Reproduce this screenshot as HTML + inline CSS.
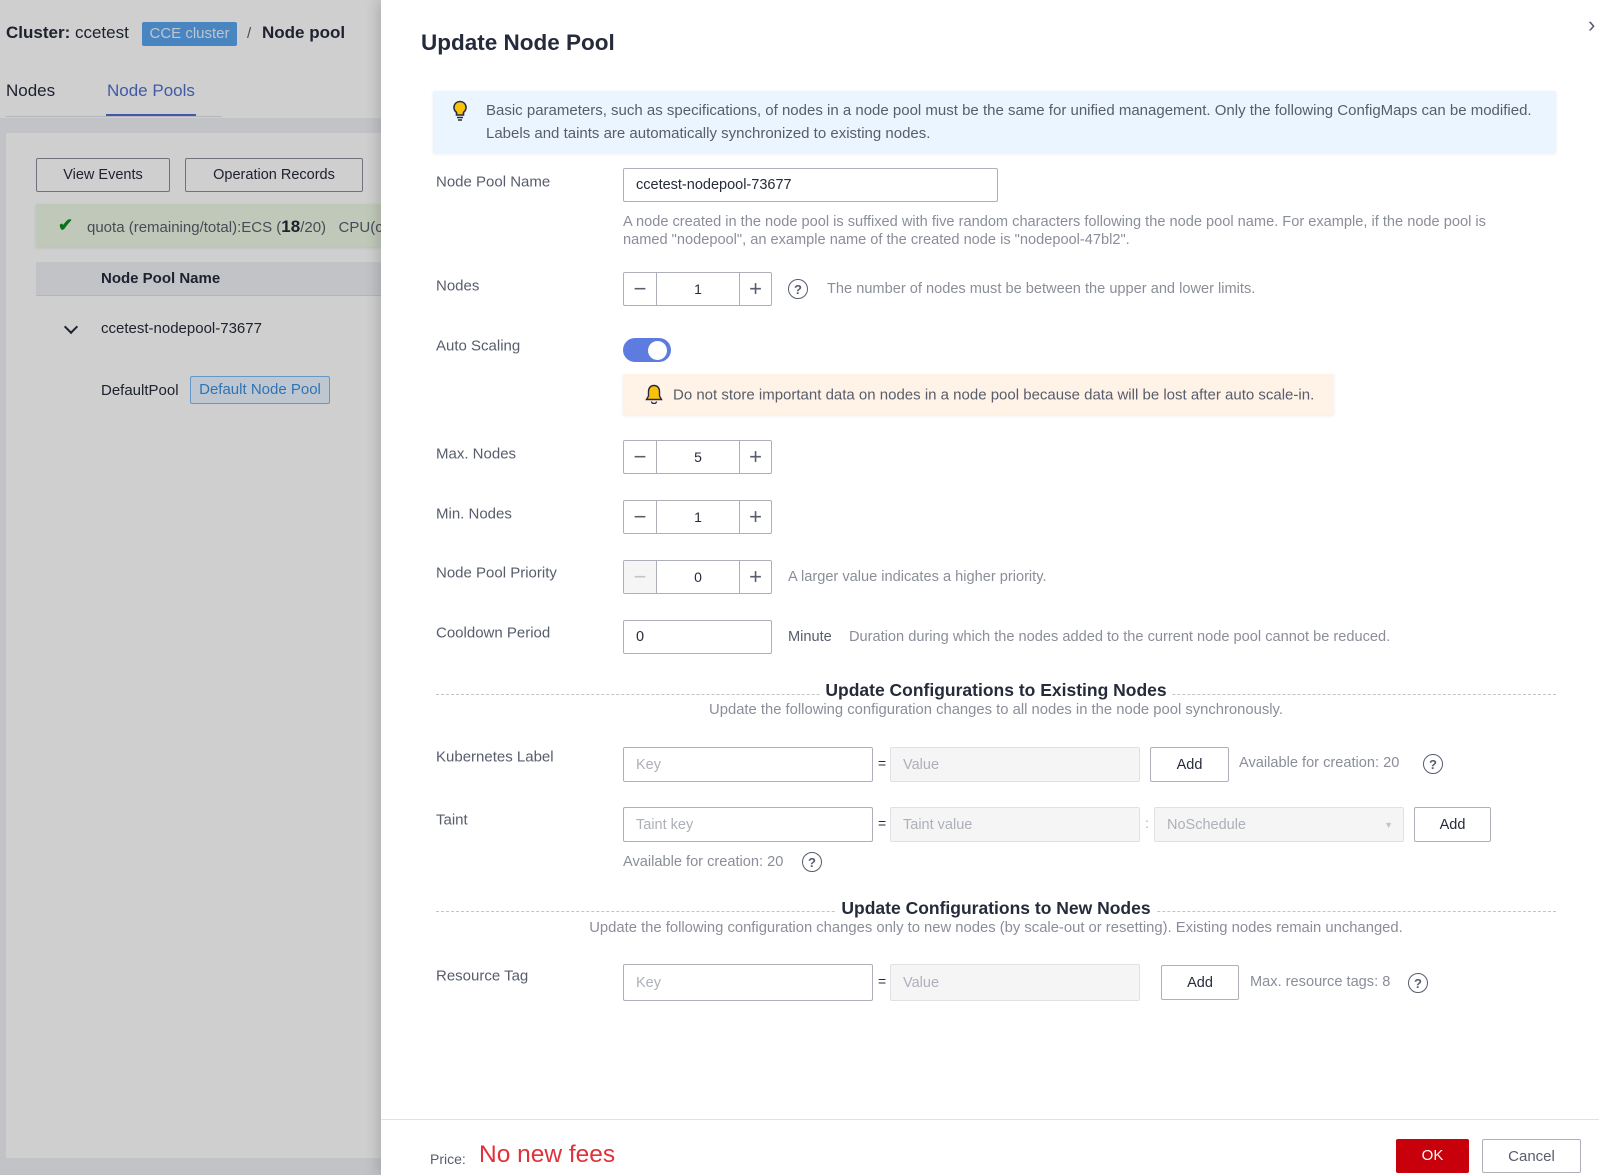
<!DOCTYPE html>
<html><head><meta charset="utf-8"><style>
*{box-sizing:border-box;margin:0;padding:0}
body{width:1599px;height:1175px;position:relative;overflow:hidden;font-family:"Liberation Sans",Arial,sans-serif;color:#252b3a;background:#fff}
.a{position:absolute;white-space:nowrap}
.left{position:absolute;left:0;top:0;width:381px;height:1175px;background:#fff;overflow:hidden}
.ov{position:absolute;left:0;top:0;width:381px;height:1175px;background:rgba(0,0,0,0.19)}
.drawer{position:absolute;left:381px;top:0;width:1218px;height:1175px;background:#fff;box-shadow:-4px 0 12px rgba(0,0,0,.15)}
.lbl{position:absolute;left:55px;font-size:15px;color:#575d6c;transform:translateY(-50%)}
.inp{position:absolute;border:1px solid #adb0b8;border-radius:2px;background:#fff;font-size:14.5px;display:flex;align-items:center;padding-left:12px;color:#252b3a}
.dis{background:#f5f5f6;border-color:#dfe1e6;color:#adb0b8}
.ph{color:#adb0b8}
.step{position:absolute;width:149px;height:34px;border:1px solid #adb0b8;border-radius:2px;display:flex}
.step div{display:flex;align-items:center;justify-content:center;font-size:14px}
.step .m{width:33px;border-right:1px solid #adb0b8;font-size:22px;color:#575d6c}
.step .v{flex:1}
.step .p{width:32px;border-left:1px solid #adb0b8;font-size:22px;color:#575d6c}
.hint{position:absolute;font-size:14.6px;color:#8a8e99;transform:translateY(-50%);white-space:nowrap}
.q{position:absolute;width:20px;height:20px;border:1.5px solid #575d6c;border-radius:50%;font-size:13px;display:flex;align-items:center;justify-content:center;color:#575d6c;transform:translate(-50%,-50%);font-weight:bold}
.btn{position:absolute;border:1px solid #adb0b8;border-radius:2px;background:#fff;font-size:14.5px;display:flex;align-items:center;justify-content:center;color:#252b3a}
</style></head><body>
<div class="left">
 <div class="a" style="left:6px;top:23px;font-size:17px"><b>Cluster:</b> ccetest</div>
 <div class="a" style="left:142px;top:22px;width:95px;height:24px;background:#5aa4ee;border-radius:2px;color:#eaf3fc;font-size:15px;line-height:24px;text-align:center">CCE cluster</div>
 <div class="a" style="left:247px;top:25px;font-size:15px;color:#575d6c">/</div>
 <div class="a" style="left:262px;top:23px;font-size:17px;font-weight:bold">Node pool</div>
 <div class="a" style="left:6px;top:81px;font-size:17px;color:#252b3a">Nodes</div>
 <div class="a" style="left:107px;top:81px;font-size:17px;color:#526ecc">Node Pools</div>
 <div class="a" style="left:6px;top:116px;width:216px;height:1px;background:#dfe1e6"></div>
 <div class="a" style="left:106px;top:114px;width:90px;height:2px;background:#526ecc"></div>
 <div class="a" style="left:0;top:118px;width:381px;height:1057px;background:#eef0f5"></div>
 <div class="a" style="left:6px;top:133px;width:375px;height:1025px;background:#fff"></div>
 <div class="btn" style="left:36px;top:158px;width:134px;height:34px;border-color:#8a8e99">View Events</div>
 <div class="btn" style="left:185px;top:158px;width:178px;height:34px;border-color:#8a8e99">Operation Records</div>
 <div class="a" style="left:36px;top:204px;width:345px;height:43px;background:#edf8e4;box-shadow:0 1px 3px rgba(0,0,0,.1)"></div>
 <div class="a" style="left:58px;top:215px;font-size:18px;color:#0d8d20;font-weight:bold">✔</div>
 <div class="a" style="left:87px;top:217px;font-size:15px;color:#575d6c">quota (remaining/total):ECS (<b style="font-size:17px;color:#252b3a">18</b>/20) &nbsp; CPU(c</div>
 <div class="a" style="left:36px;top:262px;width:345px;height:34px;background:#eef0f5;border-bottom:1px solid #dfe1e6"></div>
 <div class="a" style="left:101px;top:270px;font-size:15px;font-weight:bold;color:#252b3a">Node Pool Name</div>
 <div class="a" style="left:66px;top:322px;width:10px;height:10px;border-right:2px solid #252b3a;border-bottom:2px solid #252b3a;transform:rotate(45deg)"></div>
 <div class="a" style="left:101px;top:320px;font-size:15px">ccetest-nodepool-73677</div>
 <div class="a" style="left:101px;top:382px;font-size:15px">DefaultPool</div>
 <div class="a" style="left:190px;top:376px;width:140px;height:28px;background:#ebf5ff;border:1px solid #7fbbf5;border-radius:2px;color:#3b8ee0;font-size:15px;line-height:26px;text-align:center">Default Node Pool</div>
 <div class="ov"></div>
</div>
<div class="drawer">
 <div class="a" style="left:40px;top:30px;font-size:22.5px;font-weight:bold;color:#252b3a">Update Node Pool</div>
 <div class="a" style="left:1207px;top:12px;font-size:22px;color:#575d6c">›</div>
 <div class="a" style="left:52px;top:91px;width:1123px;height:62px;background:#ebf5ff;box-shadow:0 1px 3px rgba(0,0,0,.08)"></div>
 <svg class="a" style="left:71px;top:100px" width="16" height="22" viewBox="0 0 16 22"><path d="M8 1.5a6 6 0 0 0-3.5 10.9V15h7v-2.6A6 6 0 0 0 8 1.5z" fill="#fac20a" stroke="#252b3a" stroke-width="1.6"/><path d="M5 17.5h6M6 20h4" stroke="#252b3a" stroke-width="1.6"/></svg>
 <div class="a" style="left:105px;top:99px;font-size:15px;color:#575d6c;line-height:23px">Basic parameters, such as specifications, of nodes in a node pool must be the same for unified management. Only the following ConfigMaps can be modified.<br>Labels and taints are automatically synchronized to existing nodes.</div>

 <div class="lbl" style="top:182px">Node Pool Name</div>
 <div class="inp" style="left:242px;top:168px;width:375px;height:34px">ccetest-nodepool-73677</div>
 <div class="a" style="left:242px;top:213px;font-size:14.6px;color:#8a8e99;line-height:18px">A node created in the node pool is suffixed with five random characters following the node pool name. For example, if the node pool is<br>named "nodepool", an example name of the created node is "nodepool-47bl2".</div>

 <div class="lbl" style="top:286px">Nodes</div>
 <div class="step" style="left:242px;top:272px"><div class="m">−</div><div class="v">1</div><div class="p">+</div></div>
 <div class="q" style="left:417px;top:289px">?</div>
 <div class="hint" style="left:446px;top:289px">The number of nodes must be between the upper and lower limits.</div>

 <div class="lbl" style="top:346px">Auto Scaling</div>
 <div class="a" style="left:242px;top:338px;width:48px;height:24px;border-radius:12px;background:#5e7ce0"></div>
 <div class="a" style="left:267px;top:341px;width:19px;height:19px;border-radius:50%;background:#fff"></div>
 <div class="a" style="left:242px;top:374px;width:711px;height:41px;background:#fff3e8;box-shadow:0 1px 3px rgba(0,0,0,.08)"></div>
 <svg class="a" style="left:264px;top:384px" width="18" height="20" viewBox="0 0 18 20"><path d="M9 1.5c-3.5 0-5.5 2.7-5.5 6v4.5L1.5 15.5h15l-2-3.5V7.5c0-3.3-2-6-5.5-6z" fill="#fac20a" stroke="#252b3a" stroke-width="1.4"/><path d="M6.5 17.5a2.5 2 0 0 0 5 0" fill="none" stroke="#252b3a" stroke-width="1.4"/></svg>
 <div class="hint" style="left:292px;top:395px;color:#575d6c;font-size:15px">Do not store important data on nodes in a node pool because data will be lost after auto scale-in.</div>

 <div class="lbl" style="top:454px">Max. Nodes</div>
 <div class="step" style="left:242px;top:440px"><div class="m">−</div><div class="v">5</div><div class="p">+</div></div>
 <div class="lbl" style="top:514px">Min. Nodes</div>
 <div class="step" style="left:242px;top:500px"><div class="m">−</div><div class="v">1</div><div class="p">+</div></div>
 <div class="lbl" style="top:573px">Node Pool Priority</div>
 <div class="step" style="left:242px;top:560px"><div class="m" style="background:#f5f5f6;color:#c2c4cc">−</div><div class="v">0</div><div class="p">+</div></div>
 <div class="hint" style="left:407px;top:577px">A larger value indicates a higher priority.</div>
 <div class="lbl" style="top:633px">Cooldown Period</div>
 <div class="inp" style="left:242px;top:620px;width:149px;height:34px">0</div>
 <div class="hint" style="left:407px;top:637px;color:#575d6c">Minute</div>
 <div class="hint" style="left:468px;top:637px">Duration during which the nodes added to the current node pool cannot be reduced.</div>

 <div class="a" style="left:55px;top:694px;width:1120px;border-top:1px dashed #c2c4cc"></div>
 <div class="a" style="left:615px;top:680px;transform:translateX(-50%);background:#fff;padding:0 6px;font-size:17.5px;font-weight:bold;color:#252b3a">Update Configurations to Existing Nodes</div>
 <div class="a" style="left:615px;top:702px;transform:translateX(-50%);font-size:14.8px;color:#8a8e99">Update the following configuration changes to all nodes in the node pool synchronously.</div>

 <div class="lbl" style="top:757px">Kubernetes Label</div>
 <div class="inp ph" style="left:242px;top:747px;width:250px;height:35px">Key</div>
 <div class="a" style="left:497px;top:755px;font-size:14px">=</div>
 <div class="inp dis" style="left:509px;top:747px;width:250px;height:35px">Value</div>
 <div class="btn" style="left:769px;top:747px;width:79px;height:35px">Add</div>
 <div class="hint" style="left:858px;top:763px">Available for creation: 20</div>
 <div class="q" style="left:1052px;top:764px">?</div>

 <div class="lbl" style="top:820px">Taint</div>
 <div class="inp ph" style="left:242px;top:807px;width:250px;height:35px">Taint key</div>
 <div class="a" style="left:497px;top:815px;font-size:14px">=</div>
 <div class="inp dis" style="left:509px;top:807px;width:250px;height:35px">Taint value</div>
 <div class="a" style="left:764px;top:815px;font-size:14px;color:#adb0b8">:</div>
 <div class="inp dis" style="left:773px;top:807px;width:250px;height:35px">NoSchedule<span style="position:absolute;right:10px;font-size:9px;color:#c2c4cc">▼</span></div>
 <div class="btn" style="left:1033px;top:807px;width:77px;height:35px">Add</div>
 <div class="hint" style="left:242px;top:862px">Available for creation: 20</div>
 <div class="q" style="left:431px;top:862px">?</div>

 <div class="a" style="left:55px;top:911px;width:1120px;border-top:1px dashed #c2c4cc"></div>
 <div class="a" style="left:615px;top:898px;transform:translateX(-50%);background:#fff;padding:0 6px;font-size:17.5px;font-weight:bold;color:#252b3a">Update Configurations to New Nodes</div>
 <div class="a" style="left:615px;top:920px;transform:translateX(-50%);font-size:14.8px;color:#8a8e99">Update the following configuration changes only to new nodes (by scale-out or resetting). Existing nodes remain unchanged.</div>

 <div class="lbl" style="top:976px">Resource Tag</div>
 <div class="inp ph" style="left:242px;top:964px;width:250px;height:37px">Key</div>
 <div class="a" style="left:497px;top:973px;font-size:14px">=</div>
 <div class="inp dis" style="left:509px;top:964px;width:250px;height:37px">Value</div>
 <div class="btn" style="left:780px;top:965px;width:78px;height:35px">Add</div>
 <div class="hint" style="left:869px;top:982px">Max. resource tags: 8</div>
 <div class="q" style="left:1037px;top:983px">?</div>

 <div class="a" style="left:0;top:1119px;width:1218px;height:1px;background:#dfe1e6"></div>
 <div class="a" style="left:49px;top:1151px;font-size:14px;color:#575d6c">Price:</div>
 <div class="a" style="left:98px;top:1141px;font-size:24.5px;color:#e0323a">No new fees</div>
 <div class="a" style="left:1015px;top:1139px;width:73px;height:34px;background:#c7000b;border-radius:2px;color:#fff;font-size:15px;line-height:34px;text-align:center">OK</div>
 <div class="btn" style="left:1101px;top:1139px;width:99px;height:34px;font-size:15px;color:#575d6c">Cancel</div>
</div>
</body></html>
